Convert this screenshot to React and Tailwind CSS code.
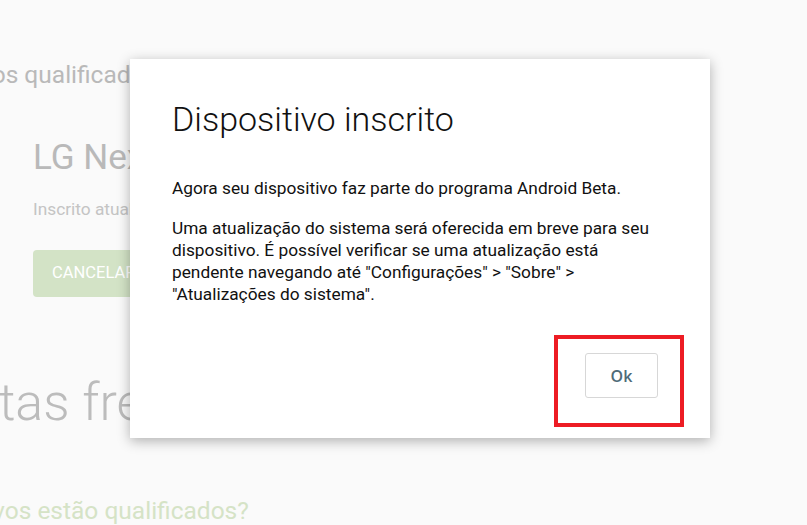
import React from "react";

const roboto = { fontFamily: "Roboto, 'Noto Sans', sans-serif" };

function PageBehind() {
  return (
    <div className="flex flex-col">
      <h2 className="ml-[-115px] mt-[60px] text-[24.5px] leading-[30px] text-[#b9b9b9] whitespace-nowrap">
        Dispositivos qualificados
      </h2>
      <div className="ml-[33px] mt-[48px] flex flex-col">
        <h3 className="text-[35px] leading-[40px] text-[#b9b9b9] whitespace-nowrap">LG Nexus 5X</h3>
        <p className="mt-[19px] text-[17.3px] leading-[24px] text-[#c4c4c4] whitespace-nowrap">
          Inscrito atualmente
        </p>
        <div className="mt-[29px] flex">
          <button className="h-[47px] rounded-[4px] bg-[#d3e3c6] px-[19px] text-[16.5px] text-white uppercase">
            Cancelar inscrição
          </button>
        </div>
      </div>
      <h2 className="ml-[-163px] mt-[76px] text-[52px] leading-[60px] font-light text-[#bcbcbc] whitespace-nowrap">
        Perguntas frequentes
      </h2>
      <p className="ml-[-7px] mt-[63px] text-[24.5px] leading-[30px] text-[#d5e3c6] whitespace-nowrap">
        vos estão qualificados?
      </p>
    </div>
  );
}

function EnrolledDialog() {
  return (
    <div className="absolute left-[130px] top-[59px] w-[580px] bg-white shadow-[0_3px_12px_rgba(0,0,0,0.3)] flex flex-col pl-[42px] pt-[38px] pb-[40px]">
      <h1 className="text-[34px] leading-[44px] font-light text-[#111]">Dispositivo inscrito</h1>
      <div className="mt-[36px] w-[492px] text-[17.3px] leading-[22px] text-[#111]">
        <p>Agora seu dispositivo faz parte do programa Android Beta.</p>
        <p className="mt-[18px]">
          Uma atualização do sistema será oferecida em breve para seu dispositivo. É possível verificar se uma
          atualização está pendente navegando até "Configurações" &gt; "Sobre" &gt; "Atualizações do sistema".
        </p>
      </div>
      <div className="mt-[48px] flex justify-end pr-[52px]">
        <button
          className="h-[45px] w-[73px] rounded-[3px] border border-[#d7d7d7] bg-white text-[16px] font-semibold text-[#4e6b78]"
          style={{ fontFamily: "'Open Sans', sans-serif" }}
        >
          Ok
        </button>
      </div>
    </div>
  );
}

export default function App() {
  return (
    <div className="relative h-[525px] w-full overflow-hidden bg-[#fafafa]" style={roboto}>
      <PageBehind />
      <EnrolledDialog />
      {/* annotation around the Ok button */}
      <div className="absolute left-[554px] top-[335px] h-[92px] w-[130px] border-[4px] border-[#ed1c24]" />
    </div>
  );
}
